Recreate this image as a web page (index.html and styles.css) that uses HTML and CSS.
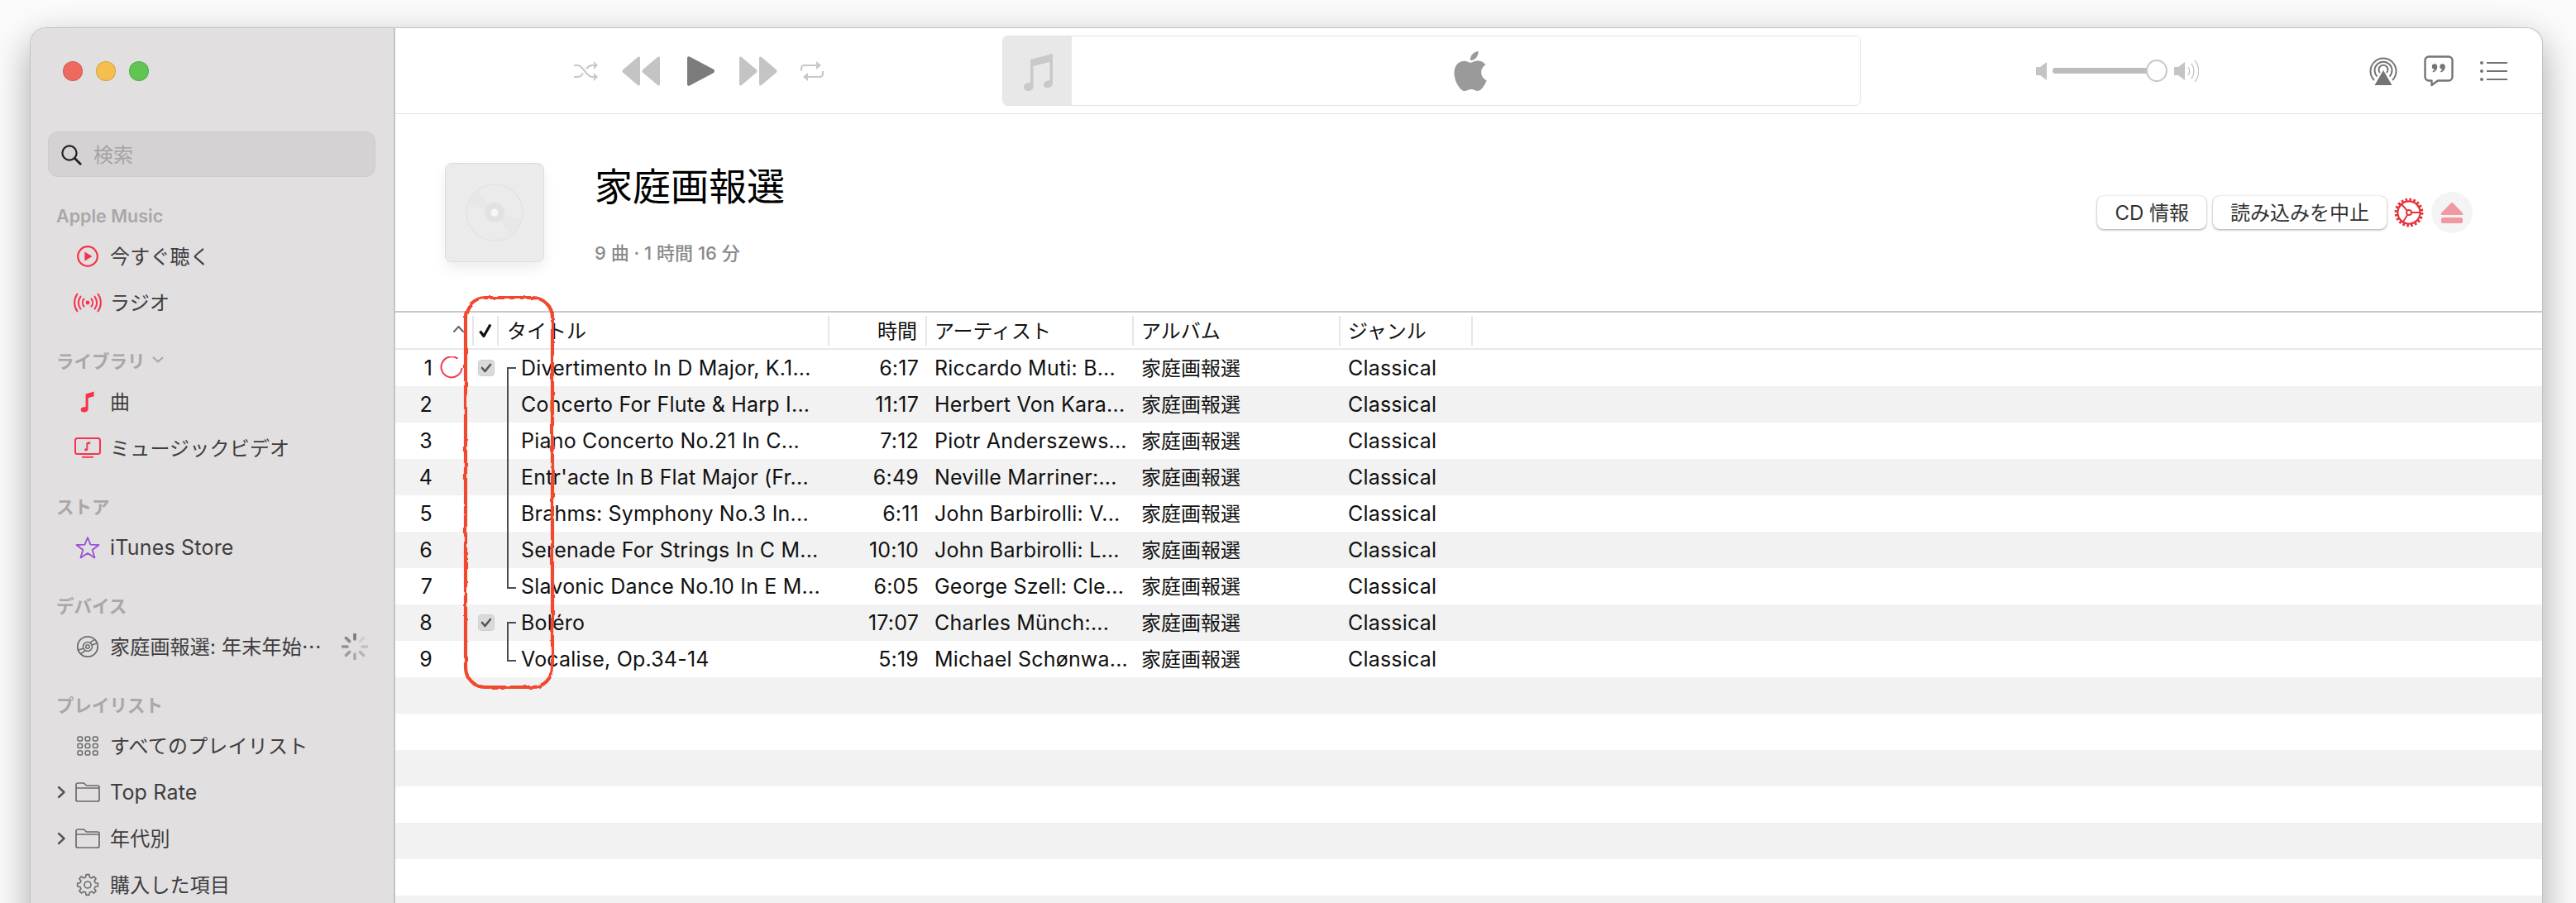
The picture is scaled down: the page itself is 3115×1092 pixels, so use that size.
FILE: index.html
```html
<!DOCTYPE html>
<html lang="ja">
<head>
  <meta charset="UTF-8">
  <title>ミュージック</title>
  <link rel="stylesheet" href="styles.css">
</head>
<body>
  <div class="window">

    <!-- サイドバー -->
    <aside class="sidebar">
      <div class="lights">
        <span class="light red"></span>
        <span class="light yellow"></span>
        <span class="light green"></span>
      </div>
      <div class="search">
        <svg width="26" height="26" viewBox="0 0 26 26" fill="none" stroke="#222" stroke-width="2.2"><circle cx="11" cy="11" r="8.6"/><path d="M17.2 17.2l7 7" stroke-width="2.8" stroke-linecap="round"/></svg>
        <span class="side-label">検索</span>
      </div>

      <div class="side-head">Apple Music</div>
      <div class="side-item">
        <span class="side-icon"><svg width="28" height="28" viewBox="0 0 28 28" fill="none"><circle cx="14" cy="14" r="11.8" stroke="#f7324a" stroke-width="2.2"/><path d="M10.4 8.6l9.2 5.4-9.2 5.4z" fill="#f7324a"/></svg></span>
        <span class="side-label">今すぐ聴く</span>
      </div>
      <div class="side-item">
        <span class="side-icon"><svg width="34" height="26" viewBox="0 0 34 26" fill="none" stroke="#f7324a" stroke-width="2" stroke-linecap="round"><circle cx="17" cy="13" r="2.4" fill="#f7324a" stroke="none"/><path d="M12.5 8.5a7 7 0 0 0 0 9M21.5 8.5a7 7 0 0 1 0 9M8.5 5.5a12 12 0 0 0 0 15M25.5 5.5a12 12 0 0 1 0 15M4.5 2.5a18 18 0 0 0 0 21M29.5 2.5a18 18 0 0 1 0 21"/></svg></span>
        <span class="side-label">ラジオ</span>
      </div>

      <div class="side-head gap">ライブラリ <svg width="14" height="9" viewBox="0 0 14 9" fill="none" stroke="#a9a7a8" stroke-width="2" stroke-linecap="round" stroke-linejoin="round"><path d="M1.5 1.5l5.5 5 5.5-5"/></svg></div>
      <div class="side-item">
        <span class="side-icon"><svg width="18" height="26" viewBox="0 0 18 26" fill="#f7324a"><path d="M6.6 3.6L16.6.6v5.6l-7 2v13.2c0 2.6-2.4 4.2-5.2 4.2C2 25.6.6 24.4.6 22.6c0-2 1.8-3.2 4-3.4l2-.3z"/></svg></span>
        <span class="side-label">曲</span>
      </div>
      <div class="side-item">
        <span class="side-icon"><svg width="32" height="26" viewBox="0 0 32 26" fill="none"><rect x="1" y="1" width="30" height="19" rx="2.5" stroke="#f7324a" stroke-width="2"/><path d="M9 23.8h14" stroke="#f7324a" stroke-width="1.8"/><path d="M14.4 6.2l4.8-1.2v2.6l-3 .8v6c0 1.2-1.1 1.9-2.4 1.9-1 0-1.7-.6-1.7-1.4 0-1 .8-1.5 1.8-1.6l.5-.1z" fill="#f7324a"/></svg></span>
        <span class="side-label">ミュージックビデオ</span>
      </div>

      <div class="side-head gap">ストア</div>
      <div class="side-item latin">
        <span class="side-icon"><svg width="30" height="28" viewBox="0 0 30 28" fill="none" stroke="#9b4fd6" stroke-width="1.8" stroke-linejoin="round"><path d="M15 2l3.5 8.6 10 .4-7.8 6 2.8 9.4L15 21l-8.5 5.4 2.8-9.4-7.8-6 10-.4z"/></svg></span>
        iTunes Store
      </div>

      <div class="side-head gap">デバイス</div>
      <div class="side-item">
        <span class="side-icon"><svg width="28" height="28" viewBox="0 0 28 28" fill="none" stroke="#6c6c6c" stroke-width="1.5"><circle cx="14" cy="14" r="12.2" stroke-width="1.8"/><circle cx="14" cy="14" r="5.5"/><circle cx="14" cy="14" r="2.2"/><path d="M17 9.200l5-3.600M11 18.800l-5 3.600M19 12l6-2M9 16l-6 2"/></svg></span>
        <span class="side-label grow">家庭画報選: 年末年始⋯</span>
        <svg class="busy" width="32" height="32" viewBox="-16 -16 32 32" stroke="#6b6b6b" stroke-width="3.6" stroke-linecap="round"><path d="M0-15v6" opacity=".85"/><path d="M10.600-10.600l-4.200 4.200" opacity=".14"/><path d="M15 0H9" opacity=".25"/><path d="M10.600 10.600l-4.200-4.200" opacity=".35"/><path d="M0 15V9" opacity=".45"/><path d="M-10.600 10.600l4.200-4.200" opacity=".55"/><path d="M-15 0h6" opacity=".65"/><path d="M-10.600-10.600l4.200 4.200" opacity=".75"/></svg>
      </div>

      <div class="side-head gap">プレイリスト</div>
      <div class="side-item">
        <span class="side-icon"><svg width="26" height="24" viewBox="0 0 26 24" fill="none" stroke="#6c6c6c" stroke-width="1.6"><rect x="1" y="1" width="5.5" height="5" rx="1.5"/><rect x="10.2" y="1" width="5.5" height="5" rx="1.5"/><rect x="19.5" y="1" width="5.5" height="5" rx="1.5"/><rect x="1" y="9.5" width="5.5" height="5" rx="1.5"/><rect x="10.2" y="9.5" width="5.5" height="5" rx="1.5"/><rect x="19.5" y="9.5" width="5.5" height="5" rx="1.5"/><rect x="1" y="18" width="5.5" height="5" rx="1.5"/><rect x="10.2" y="18" width="5.5" height="5" rx="1.5"/><rect x="19.5" y="18" width="5.5" height="5" rx="1.5"/></svg></span>
        <span class="side-label">すべてのプレイリスト</span>
      </div>
      <div class="side-item has-arrow latin">
        <svg class="arrow" width="11" height="16" viewBox="0 0 11 16" fill="none" stroke="#555" stroke-width="2.4" stroke-linecap="round" stroke-linejoin="round"><path d="M2 2l6.5 6L2 14"/></svg>
        <span class="side-icon"><svg width="30" height="24" viewBox="0 0 30 24" fill="none" stroke="#6c6c6c" stroke-width="1.7" stroke-linejoin="round"><path d="M1 6V3a2 2 0 0 1 2-2h7.500l3 3H27a2 2 0 0 1 2 2v15a2 2 0 0 1-2 2H3a2 2 0 0 1-2-2zM1 7h28"/></svg></span>
        Top Rate
      </div>
      <div class="side-item has-arrow">
        <svg class="arrow" width="11" height="16" viewBox="0 0 11 16" fill="none" stroke="#555" stroke-width="2.4" stroke-linecap="round" stroke-linejoin="round"><path d="M2 2l6.5 6L2 14"/></svg>
        <span class="side-icon"><svg width="30" height="24" viewBox="0 0 30 24" fill="none" stroke="#6c6c6c" stroke-width="1.7" stroke-linejoin="round"><path d="M1 6V3a2 2 0 0 1 2-2h7.500l3 3H27a2 2 0 0 1 2 2v15a2 2 0 0 1-2 2H3a2 2 0 0 1-2-2zM1 7h28"/></svg></span>
        <span class="side-label">年代別</span>
      </div>
      <div class="side-item">
        <span class="side-icon"><svg width="28" height="28" viewBox="-14 -14 28 28" fill="none" stroke="#6c6c6c" stroke-width="1.6" stroke-linejoin="round"><polygon points="9.22,-2.3 12.35,-1.96 12.35,1.96 9.22,2.3 8.14,4.89 10.11,7.35 7.35,10.11 4.89,8.14 2.3,9.22 1.96,12.35 -1.96,12.35 -2.3,9.22 -4.89,8.14 -7.35,10.11 -10.11,7.35 -8.14,4.89 -9.22,2.3 -12.35,1.96 -12.35,-1.96 -9.22,-2.3 -8.14,-4.89 -10.11,-7.35 -7.35,-10.11 -4.89,-8.14 -2.3,-9.22 -1.96,-12.35 1.96,-12.35 2.3,-9.22 4.89,-8.14 7.35,-10.11 10.11,-7.35 8.14,-4.89"/><circle r="4"/></svg></span>
        <span class="side-label">購入した項目</span>
      </div>
    </aside>

    <main class="main">

      <!-- ツールバー -->
      <header class="toolbar">
        <div class="transport">
          <svg width="30" height="26" viewBox="0 0 30 26" fill="none" stroke="#c8c8c8" stroke-width="2.2"><path d="M0 6h5c6 0 10 14 17 14h4M0 20h5c2.500 0 4.500-2 6-4.500M15 10c2-2.400 4-4 7-4h4"/><path d="M24 1l5 5-5 5zM24 15l5 5-5 5z" fill="#c8c8c8" stroke="none"/></svg>
          <svg width="46" height="36" viewBox="0 0 46 36" fill="#c4c4c4"><path d="M22 2v32a1.500 1.500 0 0 1-2.400 1.200L1.500 20a2.500 2.500 0 0 1 0-4L19.600.8A1.500 1.500 0 0 1 22 2zM46 2v32a1.500 1.500 0 0 1-2.400 1.200L25.500 20a2.500 2.500 0 0 1 0-4L43.600.8A1.500 1.500 0 0 1 46 2z"/></svg>
          <svg class="play" width="33" height="36" viewBox="0 0 33 36" fill="#7c7c7c"><path d="M0 2a1.800 1.800 0 0 1 2.900-1.400l28.800 15.200a2.500 2.500 0 0 1 0 4.400L2.900 35.400A1.800 1.800 0 0 1 0 34z"/></svg>
          <svg width="46" height="36" viewBox="0 0 46 36" fill="#c4c4c4"><path d="M24 2v32a1.500 1.500 0 0 0 2.400 1.200L44.500 20a2.500 2.500 0 0 0 0-4L26.400.8A1.500 1.500 0 0 0 24 2zM0 2v32a1.500 1.500 0 0 0 2.400 1.200L20.500 20a2.500 2.500 0 0 0 0-4L2.400.8A1.500 1.500 0 0 0 0 2z"/></svg>
          <svg width="28" height="26" viewBox="0 0 28 26" fill="none" stroke="#c8c8c8" stroke-width="2.2"><path d="M1 13V9.500A3.500 3.500 0 0 1 4.500 6H21M27 13v3.500a3.500 3.500 0 0 1-3.500 3.500H7"/><path d="M19 1l6 5-6 5zM9 15l-6 5 6 5z" fill="#c8c8c8" stroke="none"/></svg>
        </div>

        <div class="lcd">
          <div class="lcd-art">
            <svg width="36" height="48" viewBox="0 0 36 48" fill="#c9c9c9"><path d="M9 10L36 3v35c0 4-3.500 6.500-6.500 6.500-2.500 0-4.500-1.700-4.500-4 0-2.800 2.500-4.500 5-5l2.500-.5V13L12.500 18v25c0 3.500-3 5-5.800 5C3.500 48 1 46.200 1 43.500c0-3 2.500-4.700 5-5.200l3-.6z"/></svg>
          </div>
          <div class="lcd-body">
            <svg width="40" height="48" viewBox="0 0 20 24" fill="#9a9a9a" preserveAspectRatio="none"><path d="M10.150 6.900c-.95 0-2.400-1.100-3.950-1.050-2.050.05-3.900 1.200-4.950 3-2.100 3.700-.55 9.100 1.500 12.100 1 1.450 2.200 3.100 3.800 3.050 1.500-.05 2.100-1 3.950-1 1.800 0 2.350 1 3.950.95 1.650-.05 2.700-1.500 3.700-2.950 1.150-1.700 1.600-3.300 1.650-3.400-.05 0-3.200-1.250-3.200-4.850-.05-3.050 2.450-4.500 2.600-4.550-1.450-2.100-3.650-2.350-4.400-2.400-2-.15-3.700 1.100-4.650 1.100zM13.550 3.850c.85-1.050 1.400-2.450 1.250-3.850-1.200.05-2.650.8-3.550 1.800-.8.900-1.450 2.350-1.250 3.700 1.350.1 2.700-.65 3.550-1.650z"/></svg>
          </div>
        </div>

        <div class="volume">
          <svg width="14" height="22" viewBox="0 0 14 22" fill="#c4c4c4"><path d="M0 6h5l8-6v22l-8-6H0z"/></svg>
          <div class="vol-track"><span class="vol-knob"></span></div>
          <svg width="30" height="28" viewBox="0 0 30 28" fill="none" stroke="#c4c4c4" stroke-width="1.3"><path d="M0 9h5l8-6v22l-8-6H0z" fill="#c4c4c4" stroke="none"/><path d="M17 9a9 9 0 0 1 0 10M21 5a15 15 0 0 1 0 18M25 1a20 20 0 0 1 0 26"/></svg>
        </div>

        <div class="tool-icons">
          <svg width="34" height="36" viewBox="0 0 34 36" fill="none" stroke="#747474" stroke-width="2"><path d="M6 29a15.500 15.500 0 1 1 22 0M9.500 24.500a10.500 10.500 0 1 1 15 0M13 20a5.500 5.500 0 1 1 8 0"/><path d="M17 17l10.500 18h-21z" fill="#747474" stroke="none"/></svg>
          <svg width="36" height="38" viewBox="0 0 36 38" fill="none"><path d="M6 1.500h24A4.500 4.500 0 0 1 34.500 6v20a4.500 4.500 0 0 1-4.500 4.500H17L9.500 36v-5.500H6A4.500 4.500 0 0 1 1.500 26V6A4.500 4.500 0 0 1 6 1.500z" stroke="#747474" stroke-width="2.4" stroke-linejoin="round"/><circle cx="13" cy="13.500" r="3.200" fill="#747474"/><circle cx="22.500" cy="13.500" r="3.200" fill="#747474"/><path d="M16.200 13.500c0 3.500-2 6-5 7l-.7-1.300c1.500-.8 2.500-2 2.500-3.700zM25.700 13.500c0 3.500-2 6-5 7l-.7-1.300c1.500-.8 2.500-2 2.500-3.700z" fill="#747474"/></svg>
          <svg width="33" height="24" viewBox="0 0 33 24" fill="#747474"><circle cx="2" cy="2" r="2"/><circle cx="2" cy="12" r="2"/><circle cx="2" cy="22" r="2"/><rect x="8" y="1" width="25" height="2"/><rect x="8" y="11" width="25" height="2"/><rect x="8" y="21" width="25" height="2"/></svg>
        </div>
      </header>

      <!-- アルバム情報 -->
      <section class="album-head">
        <div class="album-art">
          <svg width="72" height="72" viewBox="0 0 72 72" fill="none"><circle cx="36" cy="36" r="34" fill="#ebebeb" stroke="#e3e3e3" stroke-width="1.5"/><path d="M36 36L16 10A33 33 0 0 0 4 27zM36 36L56 62A33 33 0 0 0 68 45z" fill="#e7e7e7"/><circle cx="36" cy="36" r="12" fill="#e2e2e2"/><circle cx="36" cy="36" r="4.500" fill="#f6f6f6"/></svg>
        </div>
        <div class="album-text">
          <h1>家庭画報選</h1>
          <p>9 曲 · 1 時間 16 分</p>
        </div>
        <div class="album-actions">
          <button class="btn">CD 情報</button>
          <button class="btn">読み込みを中止</button>
          <svg class="rip" width="36" height="36" viewBox="-18 -18 36 36" fill="none" stroke="#e8323c"><circle r="15.8" stroke-width="3.2" stroke-dasharray="2.7 2.26"/><circle r="13.6" stroke-width="2.2"/><path d="M0 0L-9-10M0 0H14M0 0L-7 11" stroke-width="2"/><circle r="3" fill="#fff" stroke-width="2"/></svg>
          <button class="eject"><svg width="28" height="26" viewBox="0 0 28 26" fill="#ef9aa0"><path d="M14 1a2 2 0 0 1 1.500.7l11.500 12c.8.900.2 2.300-1 2.300H2c-1.200 0-1.800-1.400-1-2.300L12.500 1.700A2 2 0 0 1 14 1z"/><rect x="1" y="19" width="26" height="7" rx="2"/></svg></button>
        </div>
      </section>

      <!-- 曲リスト -->
      <section class="tracks">
        <div class="row head">
          <div class="cell num"><svg class="sort" width="13" height="8" viewBox="0 0 13 8" fill="none" stroke="#666" stroke-width="2" stroke-linecap="round" stroke-linejoin="round"><path d="M1 7l5.500-6L12 7"/></svg></div>
          <div class="cell check"><svg width="18" height="18" viewBox="0 0 18 18" fill="none" stroke="#111" stroke-width="3.2" stroke-linejoin="round"><path d="M2.500 9.500l4.500 6 8-14"/></svg></div>
          <div class="cell title">タイトル</div>
          <div class="cell time">時間</div>
          <div class="cell">アーティスト</div>
          <div class="cell">アルバム</div>
          <div class="cell">ジャンル</div>
        </div>

        <div class="list">
          <div class="row">
            <div class="cell num"><span>1</span><svg class="ripping" width="28" height="28" viewBox="0 0 28 28" fill="none"><path d="M21.500 2.800A12.500 12.500 0 1 0 26.500 14" stroke="#ee3d4e" stroke-width="2"/></svg></div>
            <div class="cell check"><span class="box"><svg width="14" height="12" viewBox="0 0 14 12" fill="none" stroke="#555" stroke-width="2.6" stroke-linecap="round" stroke-linejoin="round"><path d="M2 6l3.500 4L12 2"/></svg></span></div>
            <div class="cell title brk-top">Divertimento In D Major, K.1...</div>
            <div class="cell time">6:17</div>
            <div class="cell">Riccardo Muti: B...</div>
            <div class="cell jp">家庭画報選</div>
            <div class="cell">Classical</div>
          </div>
          <div class="row">
            <div class="cell num"><span>2</span></div>
            <div class="cell check"></div>
            <div class="cell title brk-mid">Concerto For Flute &amp; Harp I...</div>
            <div class="cell time">11:17</div>
            <div class="cell">Herbert Von Kara...</div>
            <div class="cell jp">家庭画報選</div>
            <div class="cell">Classical</div>
          </div>
          <div class="row">
            <div class="cell num"><span>3</span></div>
            <div class="cell check"></div>
            <div class="cell title brk-mid">Piano Concerto No.21 In C...</div>
            <div class="cell time">7:12</div>
            <div class="cell">Piotr Anderszews...</div>
            <div class="cell jp">家庭画報選</div>
            <div class="cell">Classical</div>
          </div>
          <div class="row">
            <div class="cell num"><span>4</span></div>
            <div class="cell check"></div>
            <div class="cell title brk-mid">Entr'acte In B Flat Major (Fr...</div>
            <div class="cell time">6:49</div>
            <div class="cell">Neville Marriner:...</div>
            <div class="cell jp">家庭画報選</div>
            <div class="cell">Classical</div>
          </div>
          <div class="row">
            <div class="cell num"><span>5</span></div>
            <div class="cell check"></div>
            <div class="cell title brk-mid">Brahms: Symphony No.3 In...</div>
            <div class="cell time">6:11</div>
            <div class="cell">John Barbirolli: V...</div>
            <div class="cell jp">家庭画報選</div>
            <div class="cell">Classical</div>
          </div>
          <div class="row">
            <div class="cell num"><span>6</span></div>
            <div class="cell check"></div>
            <div class="cell title brk-mid">Serenade For Strings In C M...</div>
            <div class="cell time">10:10</div>
            <div class="cell">John Barbirolli: L...</div>
            <div class="cell jp">家庭画報選</div>
            <div class="cell">Classical</div>
          </div>
          <div class="row">
            <div class="cell num"><span>7</span></div>
            <div class="cell check"></div>
            <div class="cell title brk-end">Slavonic Dance No.10 In E M...</div>
            <div class="cell time">6:05</div>
            <div class="cell">George Szell: Cle...</div>
            <div class="cell jp">家庭画報選</div>
            <div class="cell">Classical</div>
          </div>
          <div class="row">
            <div class="cell num"><span>8</span></div>
            <div class="cell check"><span class="box"><svg width="14" height="12" viewBox="0 0 14 12" fill="none" stroke="#555" stroke-width="2.6" stroke-linecap="round" stroke-linejoin="round"><path d="M2 6l3.500 4L12 2"/></svg></span></div>
            <div class="cell title brk-top">Boléro</div>
            <div class="cell time">17:07</div>
            <div class="cell">Charles Münch:...</div>
            <div class="cell jp">家庭画報選</div>
            <div class="cell">Classical</div>
          </div>
          <div class="row">
            <div class="cell num"><span>9</span></div>
            <div class="cell check"></div>
            <div class="cell title brk-end">Vocalise, Op.34-14</div>
            <div class="cell time">5:19</div>
            <div class="cell">Michael Schønwa...</div>
            <div class="cell jp">家庭画報選</div>
            <div class="cell">Classical</div>
          </div>
          <div class="row"></div>
          <div class="row"></div>
          <div class="row"></div>
          <div class="row"></div>
          <div class="row"></div>
          <div class="row"></div>
          <div class="row"></div>
        </div>
      </section>
    </main>
  </div>

  <!-- 手書きの赤い囲み -->
  <svg class="scribble" width="130" height="500" viewBox="0 0 130 500" fill="none">
    <filter id="rough" x="-10%" y="-10%" width="120%" height="120%">
      <feTurbulence type="fractalNoise" baseFrequency="0.09" numOctaves="2" seed="4"/>
      <feDisplacementMap in="SourceGraphic" scale="3.5"/>
    </filter>
    <rect x="12" y="12" width="105" height="471" rx="24" stroke="#f04a2e" stroke-width="4.2" filter="url(#rough)"/>
  </svg>
</body>
</html>
```

FILE: styles.css
```css
/* BASE */
* {
  margin: 0;
  padding: 0;
  box-sizing: border-box;
}
html, body {
  height: 100%;
  overflow: hidden;
}
body {
  position: relative;
  background: #fbfbfb;
  font-family: Inter, "Noto Sans CJK JP", sans-serif;
  font-size: 24px;
  color: #111;
}

/* Janela */
.window {
  display: flex;
  width: 3039px;
  height: 1100px;
  margin: 33px 0 0 36px;
  background: #fff;
  border: 1px solid #c2c2c2;
  border-bottom: 0;
  border-radius: 20px 20px 0 0;
  box-shadow: 0 16px 46px rgba(0, 0, 0, 0.33);
  overflow: hidden;
}

/* Sidebar */
.sidebar {
  flex: 0 0 441px;
  padding: 40px 22px 0 32px;
  background: #e1dfe0;
  border-right: 2px solid #c4c4c4;
  color: #3f3d3e;
}
.lights {
  display: flex;
  gap: 16px;
  height: 24px;
  margin-bottom: 61px;
  padding-left: 7px;
}
.light {
  width: 24px;
  height: 24px;
  border-radius: 50%;
  border: 1px solid rgba(0, 0, 0, 0.14);
}
.light.red { background: #ee6a5f; }
.light.yellow { background: #f5bf4f; }
.light.green { background: #61c554; }

.search {
  display: flex;
  align-items: center;
  gap: 14px;
  width: 396px;
  height: 55px;
  margin: 0 0 26px -11px;
  padding-left: 14px;
  background: #d4d2d3;
  border: 1px solid #cdcbcc;
  border-radius: 12px;
  color: #a5a3a4;
}

.side-head {
  display: flex;
  align-items: center;
  gap: 8px;
  height: 42px;
  margin-left: -1px;
  font-size: 21.5px;
  font-weight: 600;
  color: #a9a7a8;
}
.side-head.gap {
  margin-top: 22px;
  padding-bottom: 3px;
}
.side-item {
  display: flex;
  align-items: center;
  height: 56px;
  padding-left: 18px;
  white-space: nowrap;
  letter-spacing: 0.2px;
}
.side-item.latin {
  font-size: 25px;
}
.side-item.has-arrow {
  padding-left: 0;
}
.arrow {
  flex: 0 0 11px;
  margin-right: 7px;
}
.side-icon {
  display: flex;
  justify-content: center;
  align-items: center;
  flex: 0 0 38px;
  margin-right: 8px;
}
/* Noto fica baixo na linha: sobe o texto japonês */
.side-label {
  margin-bottom: 3px;
}
.side-label.grow {
  flex: 1;
}
.busy {
  margin-right: 9px;
}

/* Main */
.main {
  flex: 1;
  min-width: 0;
}

/* Toolbar */
.toolbar {
  display: flex;
  align-items: center;
  height: 104px;
  border-bottom: 1px solid #e2e2e2;
}
.transport {
  display: flex;
  align-items: center;
  gap: 28px;
  margin-left: 216px;
}
.transport .play {
  margin: 0 2px 0 5px;
}
.lcd {
  display: flex;
  width: 1038px;
  height: 85px;
  margin-left: 216px;
  border: 1px solid #e3e3e3;
  border-radius: 6px;
  overflow: hidden;
}
.lcd-art {
  display: flex;
  justify-content: center;
  align-items: center;
  flex: 0 0 83px;
  background: #e8e8e8;
}
.lcd-body {
  display: flex;
  flex: 1;
  justify-content: center;
  align-items: center;
  padding-left: 10px;
}
.volume {
  display: flex;
  align-items: center;
  margin-left: 212px;
}
.vol-track {
  position: relative;
  width: 126px;
  height: 7px;
  margin: 0 21px 0 6px;
  background: #bdbdbd;
  border-radius: 4px;
}
.vol-knob {
  position: absolute;
  right: -13px;
  top: -10px;
  width: 26px;
  height: 27px;
  background: #fff;
  border: 2px solid #c6c6c6;
  border-radius: 50%;
}
.tool-icons {
  display: flex;
  align-items: center;
  gap: 32px;
  margin-left: auto;
  padding-right: 42px;
}

/* Album */
.album-head {
  display: flex;
  align-items: flex-start;
  height: 238px;
  padding: 59px 84px 0 60px;
}
.album-art {
  display: flex;
  justify-content: center;
  align-items: center;
  width: 120px;
  height: 120px;
  background: #ebebeb;
  border: 1px solid #dcdcdc;
  border-radius: 8px;
  box-shadow: 0 8px 16px rgba(0, 0, 0, 0.07);
}
.album-text {
  margin-left: 61px;
}
.album-text h1 {
  font-size: 46px;
  font-weight: 400;
  line-height: 56px;
  color: #000;
}
.album-text p {
  margin-top: 38px;
  font-size: 22px;
  font-weight: 500;
  line-height: 30px;
  color: #8a8a8a;
}
.album-actions {
  display: flex;
  align-items: center;
  margin: 35px 0 0 auto;
}
.btn {
  height: 40px;
  margin-right: 8px;
  padding: 0 21px 3px;
  font: inherit;
  color: #333;
  background: #fff;
  border: 0;
  border-radius: 8px;
  box-shadow: 0 1px 3px rgba(0, 0, 0, 0.35), 0 0 1px rgba(0, 0, 0, 0.25);
}
.rip {
  margin: 0 9px 0 1px;
}
.eject {
  display: flex;
  justify-content: center;
  align-items: center;
  width: 50px;
  height: 50px;
  background: #f4f4f4;
  border: 0;
  border-radius: 50%;
}

/* Lista */
.tracks {
  border-top: 2px solid #c8c8c8;
}
.row {
  display: grid;
  grid-template-columns: 95px 30px 400px 118px 250px 250px 160px 1fr;
  align-items: center;
  height: 44px;
  font-size: 25px;
  letter-spacing: 0.2px;
}
.row.head {
  height: 45px;
  border-bottom: 2px solid #e8e8e8;
  font-size: 24px;
  letter-spacing: 0;
}
.row.head .cell {
  height: 36px;
  line-height: 38px;
  border-right: 2px solid #e6e6e6;
}
.cell {
  padding-left: 9px;
  white-space: nowrap;
  overflow: hidden;
}
.cell.jp {
  padding-bottom: 3px;
  font-size: 24px;
  letter-spacing: 0;
}
.cell.num {
  display: flex;
  align-items: center;
  padding-left: 0;
  overflow: visible;
}
.cell.num span {
  flex: 0 0 45px;
  text-align: right;
}
.ripping {
  margin-left: 9px;
}
.sort {
  margin-left: 70px;
  margin-bottom: 4px;
}
.cell.check {
  display: flex;
  justify-content: center;
  align-items: center;
  padding-left: 0;
  overflow: visible;
}
.box {
  display: flex;
  justify-content: center;
  align-items: center;
  width: 20px;
  height: 20px;
  background: #dadada;
  border: 1px solid #cfcfcf;
  border-radius: 4px;
}
.cell.title {
  position: relative;
  align-self: stretch;
  padding-left: 27px;
  line-height: 45px;
}
.row.head .cell.title {
  padding-left: 10px;
  align-self: center;
}
.cell.time {
  padding: 0 10px 0 0;
  text-align: right;
}

/* Colchetes das faixas unidas */
.brk-top::before,
.brk-mid::before,
.brk-end::before {
  content: "";
  position: absolute;
  left: 10px;
  width: 9px;
  border-left: 2px solid #4c4c4c;
}
.brk-top::before {
  top: 21px;
  bottom: 0;
  border-top: 2px solid #4c4c4c;
}
.brk-mid::before {
  top: 0;
  bottom: 0;
}
.brk-end::before {
  top: 0;
  height: 23px;
  border-bottom: 2px solid #4c4c4c;
}
.list .row:nth-child(even) {
  background: #f2f2f2;
}

/* Anotação por cima da tabela */
.scribble {
  position: absolute;
  left: 551px;
  top: 348px;
}
```
